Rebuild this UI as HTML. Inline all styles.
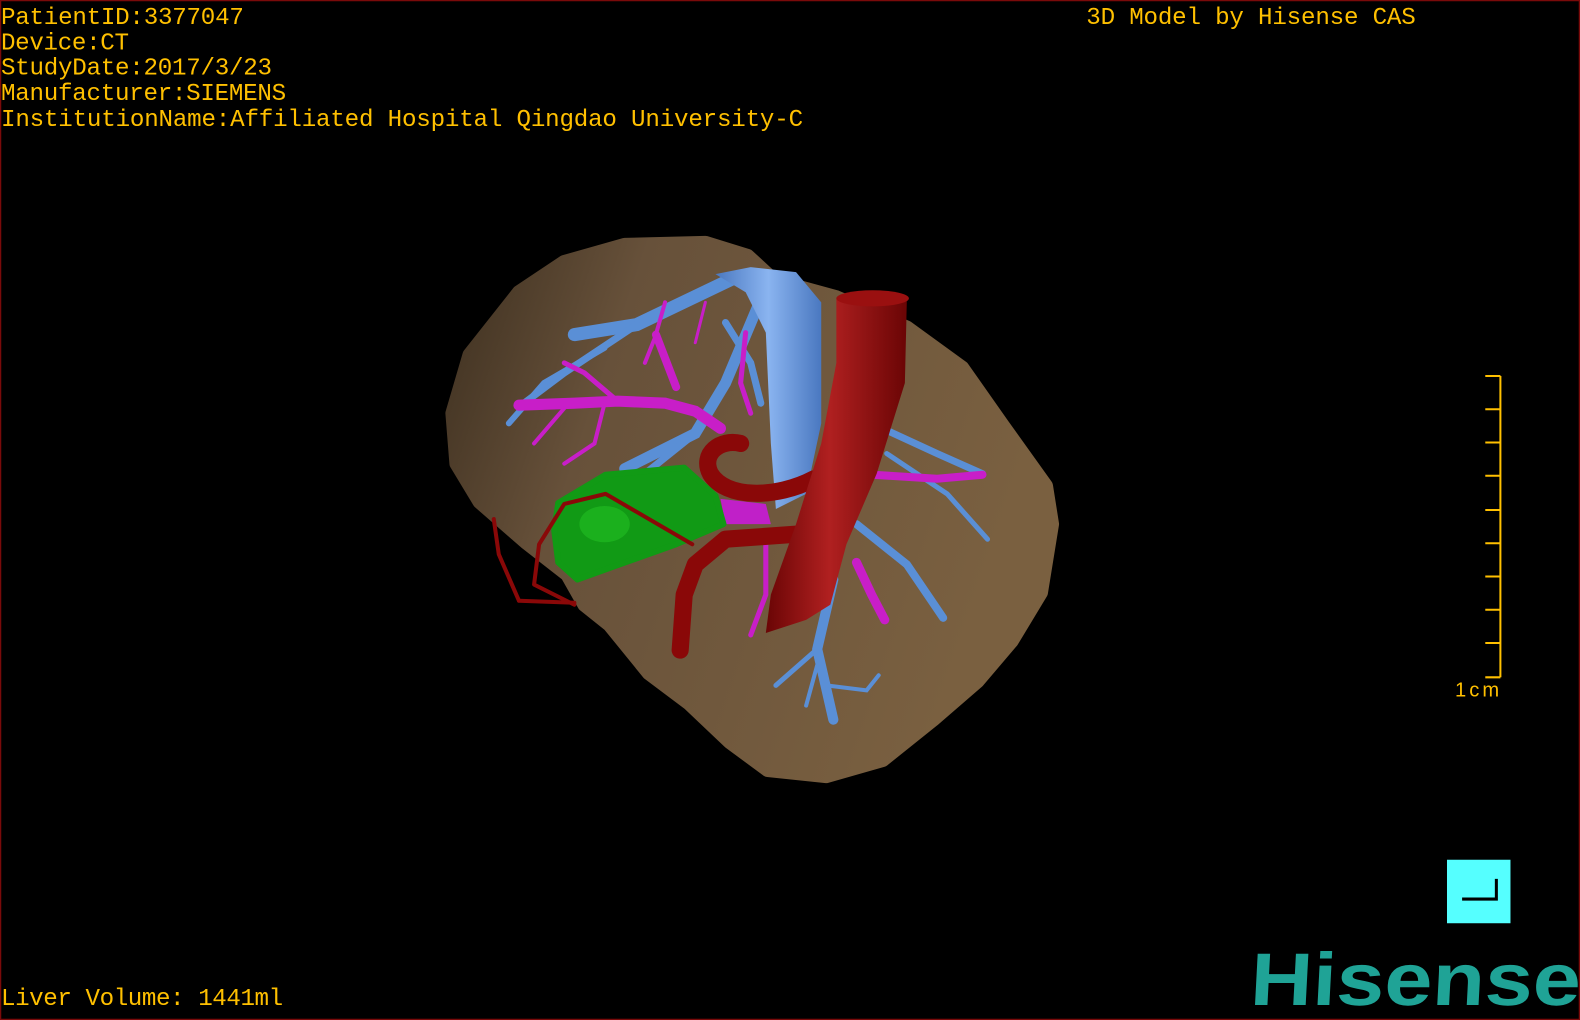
<!DOCTYPE html>
<html><head><meta charset="utf-8"><style>
html,body{margin:0;padding:0;background:#000;width:1580px;height:1020px;overflow:hidden}
svg{display:block}
</style></head><body>
<svg width="1580" height="1020" viewBox="0 0 1568 1012" preserveAspectRatio="none" xmlns="http://www.w3.org/2000/svg">
<defs>
<linearGradient id="lv" x1="0" y1="0" x2="1" y2="0.3">
<stop offset="0" stop-color="#3e3020"/><stop offset="0.3" stop-color="#67513a"/><stop offset="1" stop-color="#7a6040"/>
</linearGradient>
<linearGradient id="ao" x1="0" y1="0" x2="1" y2="0">
<stop offset="0" stop-color="#6a0505"/><stop offset="0.45" stop-color="#b02020"/><stop offset="1" stop-color="#6a0505"/>
</linearGradient>
<linearGradient id="ivc" x1="0" y1="0" x2="1" y2="0">
<stop offset="0" stop-color="#4a78c0"/><stop offset="0.5" stop-color="#8ab4f0"/><stop offset="1" stop-color="#4a78c0"/>
</linearGradient>
</defs>
<rect x="0.5" y="0.5" width="1567" height="1011" fill="#000" stroke="#7a0a0a" stroke-width="1.5"/>
<path d="M515,290 L560,260 L620,243 L700,241 L742,254 L768,278 L830,295 L900,325 L955,365 L995,422 L1038,482 L1044,520 L1033,588 L1004,636 L970,676 L926,714 L876,754 L820,770 L762,764 L724,736 L684,698 L644,668 L605,620 L580,600 L563,570 L522,538 L476,498 L453,460 L449,410 L466,352 Z" fill="url(#lv)" stroke="url(#lv)" stroke-width="14" stroke-linejoin="round"/>
<g stroke="#5a8fd6" stroke-linecap="round" fill="none">
<path d="M726,277 L632,322 L570,332" stroke-width="13"/>
<path d="M632,322 L560,370 L520,400" stroke-width="7"/>
<path d="M600,345 L540,380 L505,420" stroke-width="6"/>
<path d="M760,285 L720,380 L690,430 L620,465" stroke-width="11"/>
<path d="M690,430 L640,470 L600,490" stroke-width="7"/>
<path d="M827,575 L811,644 L827,714" stroke-width="10"/>
<path d="M811,644 L770,680" stroke-width="5"/>
<path d="M820,680 L860,685 L872,670" stroke-width="4"/>
<path d="M811,660 L800,700" stroke-width="4"/>
<path d="M850,520 L900,560 L936,613" stroke-width="8"/>
<path d="M865,420 L930,450 L975,470" stroke-width="7"/>
<path d="M880,450 L940,490 L980,535" stroke-width="5"/>
<path d="M720,320 L745,360 L755,400" stroke-width="7"/>
</g>
<path d="M710,272 L745,265 L790,270 L815,300 L815,420 L800,490 L770,505 L765,440 L760,330 L740,290 Z" fill="url(#ivc)"/>
<g stroke="#c81ec8" stroke-linecap="round" fill="none">
<path d="M515,402 L570,400 L613,398 L660,400 L690,408 L715,425" stroke-width="11"/>
<path d="M651,332 L671,384" stroke-width="8"/>
<path d="M613,398 L580,370 L560,360" stroke-width="5"/>
<path d="M560,405 L530,440" stroke-width="4"/>
<path d="M600,400 L590,440 L560,460" stroke-width="4"/>
<path d="M660,300 L650,335 L640,360" stroke-width="4"/>
<path d="M700,300 L690,340" stroke-width="3"/>
<path d="M740,330 L735,380 L745,410" stroke-width="5"/>
<path d="M866,471 L930,475 L975,471" stroke-width="8"/>
<path d="M850,558 L865,590 L878,615" stroke-width="9"/>
<path d="M760,540 L760,590 L745,630" stroke-width="5"/>
</g>
<path d="M715,495 L760,500 L765,520 L720,520 Z" fill="#c020c8"/>
<path d="M554,499 L601,471 L679,464 L710,492 L718,520 L671,540 L612,561 L573,575 L554,558 L550,526 Z" fill="#119a15" stroke="#119a15" stroke-width="6" stroke-linejoin="round"/>
<ellipse cx="600" cy="520" rx="25" ry="18" fill="#23c023" opacity="0.6"/>
<g stroke="#8a0808" stroke-linecap="round" stroke-linejoin="round" fill="none">
<path d="M808,475 C770,495 720,495 705,470 C695,450 715,435 735,440" stroke-width="17"/>
<path d="M790,530 L720,535 L690,560 L679,590 L675,645" stroke-width="17"/>
<path d="M687,540 L601,490 L560,500 L535,540 L530,580 L570,600" stroke-width="4"/>
<path d="M515,596 L495,550 L490,515" stroke-width="4"/>
<path d="M515,596 L570,598" stroke-width="4"/>
</g>
<path d="M830,296 L900,296 L898,380 L870,470 L840,540 L824,600 L800,615 L760,628 L765,590 L790,520 L815,440 L830,360 Z" fill="url(#ao)"/>
<ellipse cx="866" cy="296" rx="36" ry="8" fill="#9a1010"/>
<g font-family="Liberation Mono, monospace" font-size="24" fill="#ffc000">
<text x="1" y="24" textLength="241">PatientID:3377047</text>
<text x="1" y="49" textLength="127">Device:CT</text>
<text x="1" y="74" textLength="269">StudyDate:2017/3/23</text>
<text x="1" y="99" textLength="283">Manufacturer:SIEMENS</text>
<text x="1" y="125" textLength="796">InstitutionName:Affiliated Hospital Qingdao University-C</text>
<text x="1078" y="24" textLength="327">3D Model by Hisense CAS</text>
<text x="1" y="997" textLength="280">Liver Volume: 1441ml</text>
</g>
<g stroke="#ffc000" stroke-width="2" fill="none">
<path d="M1489,373 V672"/>
<path d="M1474,373 H1489 M1474,406 H1489 M1474,439 H1489 M1474,472 H1489 M1474,506 H1489 M1474,539 H1489 M1474,572 H1489 M1474,605 H1489 M1474,638 H1489 M1474,672 H1489"/>
</g>
<text x="1444" y="691" font-family="Liberation Sans, sans-serif" font-size="20" fill="#ffc000" letter-spacing="3">1cm</text>
<rect x="1436" y="853" width="63" height="63" fill="#55ffff"/>
<path d="M1451,892 H1485 V872" stroke="#000" stroke-width="3" fill="none"/>
<text x="1240" y="997" font-family="Liberation Sans, sans-serif" font-weight="bold" font-size="74" fill="#1fa396" textLength="328" lengthAdjust="spacingAndGlyphs" transform="skewX(-3) translate(52,0)">Hisense</text>
</svg>
</body></html>
